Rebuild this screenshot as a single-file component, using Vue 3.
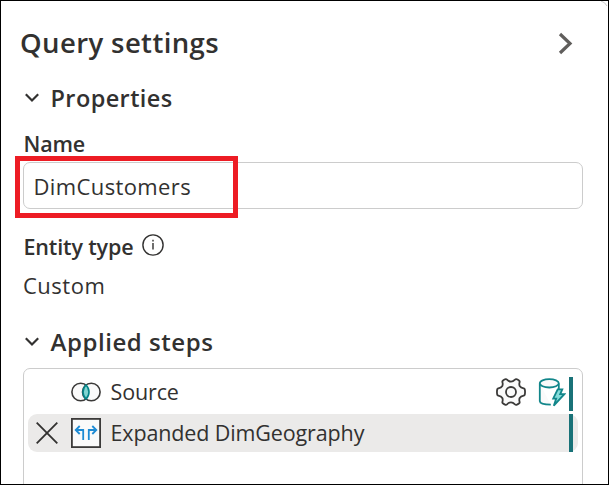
<script setup>
import { ref } from 'vue'

const queryName = ref('DimCustomers')
</script>

<template>
  <main class="panel">
    <svg class="corner" viewBox="0 0 8 8"><path d="M1 0Q5 1 7 5" /></svg>
    <header class="header">
      <h1>Query settings</h1>
      <svg class="collapse" viewBox="0 0 16 24"><path d="M2 2L12 11.5L2 21" /></svg>
    </header>

    <h2 class="section properties">
      <svg class="chevron" viewBox="0 0 16 12"><path d="M1.8 2.3L8 8.5L14.2 2.3" /></svg>
      <span>Properties</span>
    </h2>

    <div class="label name">Name</div>
    <div class="field">
      <span>{{ queryName }}</span>
      <div class="highlight"></div>
    </div>

    <div class="label entity">
      <span>Entity type</span>
      <svg class="info" viewBox="0 0 22 22">
        <circle cx="11" cy="11" r="10.1" />
        <path d="M11 9V15.5M11 5.8V7.4" />
      </svg>
    </div>
    <div class="entity-value">Custom</div>

    <h2 class="section applied">
      <svg class="chevron" viewBox="0 0 16 12"><path d="M1.8 2.3L8 8.5L14.2 2.3" /></svg>
      <span>Applied steps</span>
    </h2>

    <div class="steps">
      <div class="step source">
        <span class="remove"></span>
        <svg class="kind" viewBox="0 0 30 30">
          <g fill="#fafafa" stroke="#3b3a39" stroke-width="1.6">
            <circle cx="9.7" cy="15" r="8.8" />
            <circle cx="20.3" cy="15" r="8.8" />
          </g>
          <path d="M15 8Q18 11 18 15T15 22Q12 19 12 15T15 8Z" fill="#81d5d1" stroke="#038387" stroke-width="1.6" />
        </svg>
        <span class="step-name">Source</span>
        <svg class="gear" viewBox="0 0 30 28">
          <path d="M9.5 1.2Q10.3 .9 11 1.6Q13 3.7 15 3.7T19 1.6Q19.7.9 20.5 1.2Q22 1.7 23.2 2.7Q23.9 3.3 23.6 4.2Q22.9 6.3 23.7 8Q24.7 9.8 27.7 10.4Q28.6 10.6 28.8 11.5Q29.3 14 28.8 16.5Q28.6 17.4 27.7 17.6Q24.7 18.2 23.7 20Q22.9 21.7 23.6 23.8Q23.9 24.7 23.2 25.3Q22 26.3 20.5 26.8Q19.7 27.1 19 26.4Q17 24.3 15 24.3T11 26.4Q10.3 27.1 9.5 26.8Q8 26.3 6.8 25.3Q6.1 24.7 6.4 23.8Q7.1 21.7 6.3 20Q5.3 18.2 2.3 17.6Q1.4 17.4 1.2 16.5Q.7 14 1.2 11.5Q1.4 10.6 2.3 10.4Q5.3 9.8 6.3 8Q7.1 6.3 6.4 4.2Q6.1 3.3 6.8 2.7Q8 1.7 9.5 1.2Z" />
          <circle cx="15" cy="14" r="5" />
        </svg>
        <svg class="database" viewBox="0 0 28 30">
          <path d="M1.8 5.4V23.2C2 25.5 6.5 26.7 12.8 26.7M20.8 5.4V11" />
          <ellipse cx="11.3" cy="5.3" rx="9.5" ry="4.2" />
          <path class="bolt" d="M19.7 11.3H24.3L22.2 16.2H26.3L15.8 27.7L18.2 20.6H15.2Z" />
        </svg>
        <span class="bar"></span>
      </div>
      <div class="step selected">
        <svg class="remove" viewBox="0 0 22 22"><path d="M.7.7L21.3 21.3M21.3.7L.7 21.3" /></svg>
        <svg class="kind" viewBox="0 0 30 30">
          <rect x=".9" y=".9" width="28.2" height="28.2" fill="#fafafa" stroke="#3b3a39" stroke-width="1.8" />
          <g fill="none" stroke="#1e8bd4" stroke-width="1.8">
            <path d="M12.2 22V12H5M8.7 8L4.7 12L8.7 16" />
            <path d="M17.8 22V12H25M21.3 8L25.3 12L21.3 16" />
          </g>
        </svg>
        <span class="step-name">Expanded DimGeography</span>
        <span class="bar"></span>
      </div>
    </div>
  </main>
</template>

<style>
body {
  margin: 0;
  background: #fff;
}
</style>

<style scoped>
.panel {
  position: relative;
  box-sizing: border-box;
  width: 609px;
  height: 485px;
  padding: 21px 25px 0 22px;
  overflow: hidden;
  border: 1px solid #000;
  background: #fff;
  color: #323130;
  font-family: "Open Sans", "Noto Sans", sans-serif;
  font-size: 21.5px;
}
svg {
  display: block;
  flex: none;
  fill: none;
}
.corner {
  position: absolute;
  top: 0;
  right: 0;
  width: 8px;
  height: 8px;
  stroke: #c8c8c8;
}
h1, h2 {
  margin: 0;
  font-weight: 600;
}
.header {
  display: flex;
  align-items: center;
  justify-content: space-between;
  height: 40px;
  margin-left: -3px;
}
h1 {
  padding-top: 2px;
  font-size: 27.5px;
  line-height: 40px;
  letter-spacing: .4px;
}
.collapse {
  width: 16px;
  height: 24px;
  margin: 3px 9px 0 0;
  stroke: #605e5c;
  stroke-width: 3.2;
}
.section {
  display: flex;
  align-items: center;
  height: 30px;
  font-size: 23.5px;
  line-height: 30px;
  letter-spacing: .4px;
}
.properties {
  margin-top: 21px;
}
.chevron {
  width: 16px;
  height: 12px;
  margin: -1px 10.5px 0 1px;
  stroke: #323130;
  stroke-width: 2.2;
}
.label {
  display: flex;
  align-items: center;
  height: 28px;
  padding-left: .5px;
  font-weight: 600;
  line-height: 28px;
  letter-spacing: -.15px;
}
.name {
  margin-top: 17px;
}
.field {
  position: relative;
  display: flex;
  align-items: center;
  box-sizing: border-box;
  width: 560px;
  height: 47px;
  margin-top: 4px;
  padding: 1px 0 0 9.5px;
  border: 1px solid #ccc;
  border-radius: 7px;
  font-size: 22px;
  letter-spacing: .38px;
}
.highlight {
  position: absolute;
  top: -7px;
  left: -9px;
  box-sizing: border-box;
  width: 223px;
  height: 62px;
  border: 5px solid #ed1c24;
}
.entity {
  margin-top: 24px;
}
.info {
  width: 22px;
  height: 22px;
  margin: -4px 0 0 8.5px;
  stroke: #323130;
  stroke-width: 1.4;
}
.entity-value {
  height: 28px;
  margin-top: 10px;
  font-size: 22px;
  line-height: 28px;
  letter-spacing: .5px;
}
.applied {
  margin-top: 28px;
  font-size: 24px;
  letter-spacing: .55px;
}
.steps {
  display: flex;
  flex-direction: column;
  gap: 3px;
  box-sizing: border-box;
  width: 560px;
  height: 130px;
  margin-top: 11px;
  padding: 8px 4px;
  border: 1px solid #ccc;
  border-radius: 7px;
}
.step {
  display: flex;
  align-items: center;
  box-sizing: border-box;
  width: 550px;
  height: 38px;
  padding: 0 5px 0 8px;
  border-radius: 9px;
}
.source {
  height: 34px;
}
.selected {
  background: #ebeae9;
}
.remove {
  width: 22px;
  height: 22px;
  stroke: #323130;
  stroke-width: 1.8;
}
.kind {
  width: 30px;
  height: 30px;
  margin: 0 9.5px 0 13px;
}
.source .kind {
  margin-top: -4px;
}
.step-name {
  flex: 1;
  padding-bottom: 1px;
  white-space: nowrap;
  letter-spacing: -.13px;
}
.source .step-name {
  padding-bottom: 5px;
}
.gear {
  width: 30px;
  height: 28px;
  margin: -4px 12px 0 0;
  fill: #fafafa;
  stroke: #3b3a39;
  stroke-width: 1.8;
}
.database {
  width: 28px;
  height: 30px;
  margin: -2px 3px 0 0;
  fill: #fafafa;
  stroke: #12868a;
  stroke-width: 1.8;
}
.bolt {
  fill: #85dcda;
}
.bar {
  align-self: stretch;
  width: 4px;
  background: #197278;
}
</style>
